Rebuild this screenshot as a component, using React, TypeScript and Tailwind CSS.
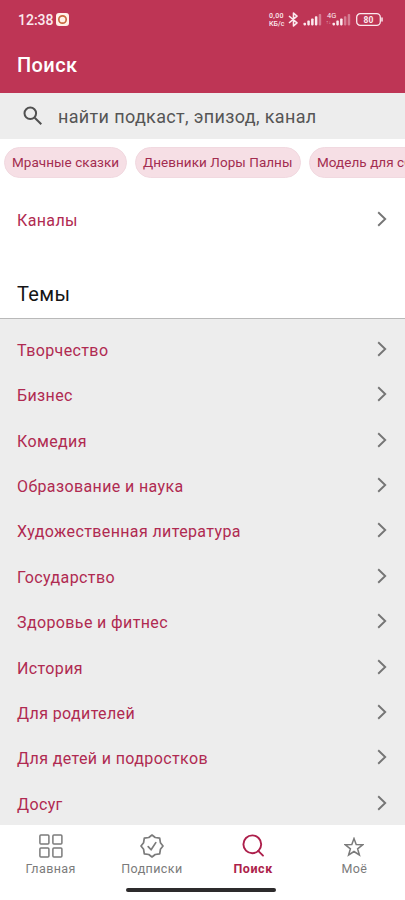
import type React from "react"
import { clsx } from "clsx"

const chips = [
  { label: "Мрачные сказки", width: "w-[123px]" },
  { label: "Дневники Лоры Палны", width: "w-[166px]" },
  { label: "Модель для сборки", width: "w-[150px]" },
]

const topics = [
  "Творчество",
  "Бизнес",
  "Комедия",
  "Образование и наука",
  "Художественная литература",
  "Государство",
  "Здоровье и фитнес",
  "История",
  "Для родителей",
  "Для детей и подростков",
  "Досуг",
]

function SignalBars({ faded }: { faded: number }) {
  return (
    <svg width="19" height="13" viewBox="0 0 19 13" fill="#fbe9ee">
      {[0, 1, 2, 3, 4].map((i) => (
        <rect
          key={i}
          x={0.5 + i * 3.8}
          y={9.8 - i * 2.2}
          width="2.5"
          height={2.6 + i * 2.2}
          rx="0.8"
          opacity={i >= 5 - faded ? 0.4 : 1}
        />
      ))}
    </svg>
  )
}

function StatusBar() {
  return (
    <div className="flex h-[39px] items-center pl-[18px] pr-[22px] text-[#fbe9ee]">
      <span className="text-[14px] font-medium leading-none">12:38</span>
      <svg className="ml-[2px]" width="13" height="13" viewBox="0 0 13 13">
        <rect width="13" height="13" rx="3" fill="#fff1e8" />
        <circle cx="6.5" cy="6.5" r="3.7" fill="none" stroke="#c9683f" strokeWidth="1.7" />
      </svg>
      <div className="ml-auto flex items-center">
        <div className="w-[17px] text-[7px] font-medium leading-[8px]">
          <div className="tracking-[0.3px]">0,00</div>
          <div>КБ/с</div>
        </div>
        <svg
          className="ml-[2px]"
          width="11"
          height="15"
          viewBox="0 0 11 15"
          fill="none"
          stroke="currentColor"
          strokeWidth="1.6"
          strokeLinejoin="round"
        >
          <path d="M1 4 9 10.8 5.5 14V1L9 4.2 1 11" />
        </svg>
        <div className="ml-[4px]">
          <SignalBars faded={1} />
        </div>
        <div className="relative ml-[10px]">
          <SignalBars faded={2} />
          <span className="absolute -left-[5px] -top-[1px] text-[7.5px] leading-none">4G</span>
          <span className="absolute -left-[6px] top-[7px] text-[5px] leading-none opacity-60">↑↓</span>
        </div>
        <svg className="ml-[5px]" width="27" height="13" viewBox="0 0 27 13" fill="none">
          <rect x="0.7" y="0.7" width="23.6" height="11.6" rx="3.6" stroke="#fbe9ee" strokeWidth="1.3" />
          <path d="M26 5v3" stroke="#fbe9ee" strokeWidth="1.5" strokeLinecap="round" />
          <text x="12.5" y="9.5" textAnchor="middle" fontSize="8.5" fontWeight="700" fill="#fbe9ee">
            80
          </text>
        </svg>
      </div>
    </div>
  )
}

function Chevron() {
  return (
    <svg
      className="mb-[4px]"
      width="10"
      height="16"
      viewBox="0 0 10 16"
      fill="none"
      stroke="#757575"
      strokeWidth="1.9"
    >
      <path d="M1.2 1.2 8.2 8l-7 6.8" />
    </svg>
  )
}

function ListRow({ label, className }: { label: string; className?: string }) {
  return (
    <div className={clsx("flex h-[45.36px] shrink-0 items-center justify-between pl-[17px] pr-[18px]", className)}>
      <span className="text-[16px] leading-none tracking-[0.38px] text-[#b02a51]">{label}</span>
      <Chevron />
    </div>
  )
}

interface NavItemProps {
  label: string
  active?: boolean
  children: React.ReactNode
}

function NavItem({ label, active, children }: NavItemProps) {
  return (
    <div
      className={clsx(
        "flex flex-1 flex-col items-center",
        active ? "font-bold text-[#ad1f4b]" : "text-[#7b7b7b]"
      )}
    >
      <div className="flex h-[26px] items-center justify-center">{children}</div>
      <span
        className={clsx("mt-[2px] text-[12.5px] leading-[15px]", active ? "tracking-[0.55px]" : "tracking-[0.4px]")}
      >
        {label}
      </span>
    </div>
  )
}

function BottomNav() {
  return (
    <nav className="flex h-[75px] shrink-0 flex-col bg-white pt-[8px]">
      <div className="flex">
        <NavItem label="Главная">
          <svg width="24" height="24" viewBox="0 0 24 24" fill="none" stroke="currentColor" strokeWidth="1.5">
            <rect x="0.9" y="0.9" width="9" height="9" rx="1" />
            <rect x="13.9" y="0.9" width="9" height="9" rx="1" />
            <rect x="0.9" y="13.9" width="9" height="9" rx="1" />
            <rect x="13.9" y="13.9" width="9" height="9" rx="1" />
          </svg>
        </NavItem>
        <NavItem label="Подписки">
          <svg
            width="24"
            height="24"
            viewBox="0 0 24 24"
            fill="none"
            stroke="currentColor"
            strokeWidth="1.7"
            strokeLinejoin="round"
            strokeLinecap="round"
          >
            <path d="M12 1 15.2 3.5 19.7 4.1 20.4 8.7 23 12 20.4 15.3 19.7 19.9 15.2 20.5 12 23 8.8 20.5 4.3 19.9 3.6 15.3 1 12 3.6 8.7 4.3 4.1 8.8 3.5Z" />
            <path d="m8.2 12.6 2.9 3.2 4.7-7.2" />
          </svg>
        </NavItem>
        <NavItem label="Поиск" active>
          <svg width="24" height="24" viewBox="0 0 24 24" fill="none" stroke="currentColor" strokeWidth="1.9">
            <circle cx="11.3" cy="10.3" r="8.9" />
            <path d="m17.2 16.8 4.8 4.8" strokeLinecap="round" />
          </svg>
        </NavItem>
        <NavItem label="Моё">
          <svg
            className="mt-[2px]"
            width="20"
            height="20"
            viewBox="0 0 20 20"
            fill="none"
            stroke="currentColor"
            strokeWidth="1.5"
          >
            <path d="m10 1.5 2.2 6 6.5.3-5.1 4 1.8 6.2-5.4-3.5L4.6 18l1.8-6.2-5.1-4 6.5-.3Z" />
          </svg>
        </NavItem>
      </div>
      <div className="ml-[126px] mt-[12px] h-[4px] w-[150px] rounded-full bg-[#2d2b2c]" />
    </nav>
  )
}

export default function App() {
  return (
    <div className="flex h-[900px] w-[405px] flex-col overflow-hidden bg-white font-[Roboto,sans-serif]">
      <header className="h-[93px] shrink-0 bg-[#be3555]">
        <StatusBar />
        <h1 className="pl-[17px] pt-[14px] text-[20px] font-medium leading-[25px] tracking-[0.4px] text-white">
          Поиск
        </h1>
      </header>

      <div className="flex h-[46px] shrink-0 items-center bg-[#ededed] pl-[23px]">
        <svg width="20" height="20" viewBox="0 0 20 20" fill="none" stroke="#505050" strokeWidth="2">
          <circle cx="7.3" cy="7.3" r="5.8" />
          <path d="m11.7 11.7 6.6 6.6" />
        </svg>
        <span className="ml-[15px] pt-px text-[18px] leading-none tracking-[0.35px] text-[#555555]">
          найти подкаст, эпизод, канал
        </span>
      </div>

      <div className="flex h-[57px] shrink-0 gap-[8px] overflow-hidden pl-[4px] pt-[8px]">
        {chips.map((chip) => (
          <div
            key={chip.label}
            className={clsx(
              "flex h-[31px] shrink-0 items-center whitespace-nowrap rounded-full border border-[#f1d9e0] bg-[#f6dfe5] pl-[7px] text-[13.5px] tracking-[0.05px] text-[#a32d50]",
              chip.width
            )}
          >
            {chip.label}
          </div>
        ))}
      </div>

      <ListRow label="Каналы" className="mt-[2px]" />

      <div className="mt-[26px] flex h-[50px] shrink-0 items-center border-b border-[#b9b9b9] pl-[17px]">
        <h2 className="text-[20px] leading-none tracking-[0.4px] text-[#151515]">Темы</h2>
      </div>

      <div className="flex min-h-0 flex-1 flex-col overflow-hidden bg-[#ededed] pt-[9px]">
        {topics.map((topic) => (
          <ListRow key={topic} label={topic} />
        ))}
      </div>

      <BottomNav />
    </div>
  )
}
